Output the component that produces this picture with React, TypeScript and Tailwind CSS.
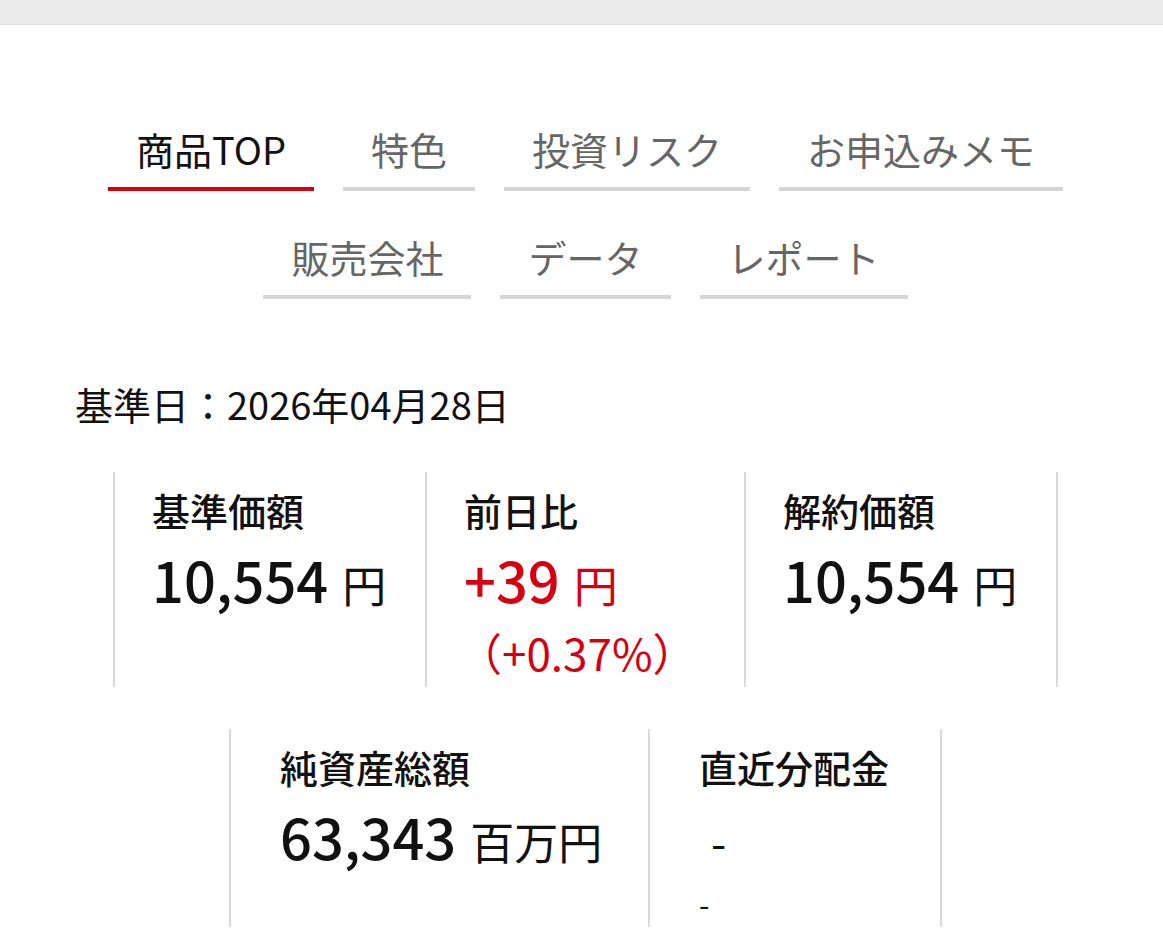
import React from 'react';

const tabRows = [
  ['商品TOP', '特色', '投資リスク', 'お申込みメモ'],
  ['販売会社', 'データ', 'レポート'],
];

interface StatCellProps {
  label: string;
  width: string;
  last?: boolean;
  children: React.ReactNode;
}

function StatCell({ label, width, last, children }: StatCellProps) {
  return (
    <div
      className={`${width} flex flex-col border-l-2 border-[#d9d9d9] ${last ? 'border-r-2' : ''}`}
    >
      <div className="text-[38px] leading-[57px] font-medium text-[#111]">{label}</div>
      {children}
    </div>
  );
}

export default function App() {
  return (
    <div className="min-h-screen bg-white font-['Noto_Sans_CJK_JP',_'Noto_Sans',_sans-serif]">
      {/* top bar */}
      <div className="h-[25px] bg-[#ececec] border-b border-[#dedede]" />

      <div className="pl-2">
        {/* Tabs */}
        <div className="mt-[95px] flex flex-col items-center gap-y-[37px]">
          {tabRows.map((row, rowIndex) => (
            <div key={rowIndex} className="flex justify-center gap-x-[29px]">
              {row.map((tab, i) => {
                const active = rowIndex === 0 && i === 0;
                return (
                  <div
                    key={tab}
                    className={`px-[28px] pb-[10px] text-[38px] leading-[57px] whitespace-nowrap border-b-4 ${
                      active ? 'border-[#d7000f] text-[#111]' : 'border-[#d6d6d6] text-[#666]'
                    }`}
                  >
                    {tab}
                  </div>
                );
              })}
            </div>
          ))}
        </div>

        {/* Date */}
        <div className="mt-[76px] pl-[67px] text-[38px] leading-[57px] text-[#111]">
          基準日：2026年04月28日
        </div>

        {/* Stats row 1 */}
        <div className="mt-[40px] flex justify-center">
          <StatCell label="基準価額" width="w-[312px] h-[215px] pl-[37px] pt-[9px]">
            <div className="mt-[7px] leading-[1.2] text-[#111]">
              <span className="text-[56px] font-medium">10,554</span>
              <span className="ml-[14px] text-[44px]">円</span>
            </div>
          </StatCell>
          <StatCell label="前日比" width="w-[319px] h-[215px] pl-[37px] pt-[9px]">
            <div className="mt-[7px] leading-[1.2] text-[#d40010]">
              <span className="text-[56px] font-medium">+39</span>
              <span className="ml-[14px] text-[44px]">円</span>
            </div>
            <div className="mt-[10px] -ml-[6px] text-[44px] leading-[60px] text-[#d40010]">（+0.37%）</div>
          </StatCell>
          <StatCell label="解約価額" width="w-[314px] h-[215px] pl-[37px] pt-[9px]" last>
            <div className="mt-[7px] leading-[1.2] text-[#111]">
              <span className="text-[56px] font-medium">10,554</span>
              <span className="ml-[14px] text-[44px]">円</span>
            </div>
          </StatCell>
        </div>

        {/* Stats row 2 */}
        <div className="mt-[42px] flex justify-center">
          <StatCell label="純資産総額" width="w-[419px] h-[198px] pl-[49px] pt-[9px]">
            <div className="mt-[7px] leading-[1.2] text-[#111]">
              <span className="text-[56px] font-medium">63,343</span>
              <span className="ml-[14px] text-[44px]">百万円</span>
            </div>
          </StatCell>
          <StatCell label="直近分配金" width="w-[294px] h-[198px] pl-[49px] pt-[9px]" last>
            <div className="mt-[7px] text-[56px] leading-[1.2] text-[#111]">
              <span className="pl-[12px] text-[44px]">-</span>
            </div>
            <div className="mt-[14px] text-[30px] leading-[40px] text-[#111]">-</div>
          </StatCell>
        </div>
      </div>
    </div>
  );
}
